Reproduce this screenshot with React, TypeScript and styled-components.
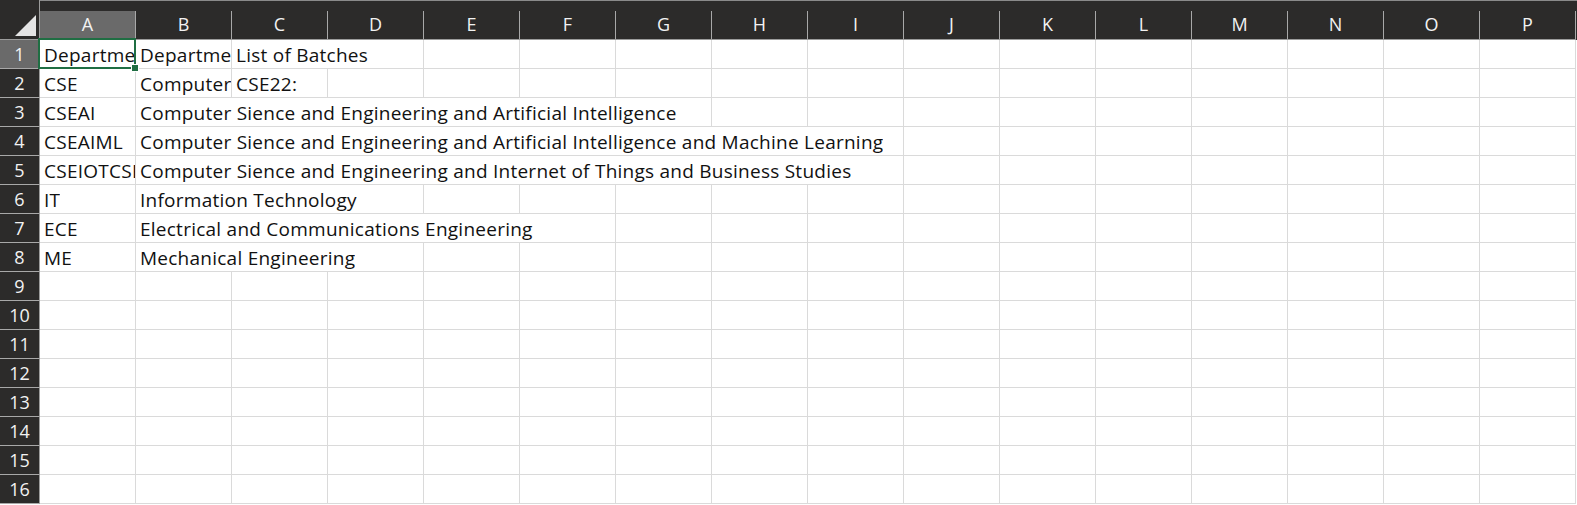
import React from 'react';
import styled, { createGlobalStyle } from 'styled-components';

const GlobalStyle = createGlobalStyle`
  html, body {
    margin: 0;
    padding: 0;
    background: #ffffff;
    overflow: hidden;
  }
`;

const COLUMNS = ['A', 'B', 'C', 'D', 'E', 'F', 'G', 'H', 'I', 'J', 'K', 'L', 'M', 'N', 'O', 'P'];
const ROW_COUNT = 16;

type CellData = { col: number; span: number; text: string };

// text spills over empty neighbours like in Excel, so a cell spans the columns its text covers
const DATA: Record<number, CellData[]> = {
  1: [
    { col: 0, span: 1, text: 'Department Code' },
    { col: 1, span: 1, text: 'Department Name' },
    { col: 2, span: 2, text: 'List of Batches' },
  ],
  2: [
    { col: 0, span: 1, text: 'CSE' },
    { col: 1, span: 1, text: 'Computer Sience and Engineering' },
    { col: 2, span: 1, text: 'CSE22:' },
  ],
  3: [
    { col: 0, span: 1, text: 'CSEAI' },
    { col: 1, span: 6, text: 'Computer Sience and Engineering and Artificial Intelligence' },
  ],
  4: [
    { col: 0, span: 1, text: 'CSEAIML' },
    { col: 1, span: 8, text: 'Computer Sience and Engineering and Artificial Intelligence and Machine Learning' },
  ],
  5: [
    { col: 0, span: 1, text: 'CSEIOTCSBS' },
    { col: 1, span: 8, text: 'Computer Sience and Engineering and Internet of Things and Business Studies' },
  ],
  6: [
    { col: 0, span: 1, text: 'IT' },
    { col: 1, span: 3, text: 'Information Technology' },
  ],
  7: [
    { col: 0, span: 1, text: 'ECE' },
    { col: 1, span: 5, text: 'Electrical and Communications Engineering' },
  ],
  8: [
    { col: 0, span: 1, text: 'ME' },
    { col: 1, span: 3, text: 'Mechanical Engineering' },
  ],
};

const Sheet = styled.div`
  display: grid;
  grid-template-columns: 40px repeat(16, 96px) 1fr;
  grid-template-rows: 40px repeat(${ROW_COUNT}, 29px);
  width: 100vw;
  height: 100vh;
  font-family: 'Open Sans', 'Noto Sans', sans-serif;
`;

const Corner = styled.div`
  background: #2c2b2a;
  border-right: 1px solid #9c9c9c;
  border-bottom: 1px solid #9c9c9c;
  box-sizing: border-box;
  display: flex;
  align-items: flex-end;
  justify-content: flex-end;
  padding: 0 3px 3px 0;
`;

const CornerTriangle = styled.div`
  width: 0;
  height: 0;
  border-left: 21px solid transparent;
  border-bottom: 21px solid #e4e4e4;
`;

const ColHeader = styled.div`
  background: #2c2b2a;
  box-shadow: inset 0 1px 0 #8a8a8a;
  border-bottom: 1px solid #9c9c9c;
  box-sizing: border-box;
  display: flex;
  align-items: flex-end;
`;

const ColLabel = styled.div<{ $selected?: boolean }>`
  flex: 1;
  height: 28px;
  box-sizing: border-box;
  border-right: 1px solid #a8a8a8;
  background: ${(p) => (p.$selected ? '#6a6a6a' : 'transparent')};
  color: #f2f2f2;
  font-size: 18px;
  line-height: 26px;
  text-align: center;
`;

const RowHeader = styled.div<{ $selected?: boolean }>`
  background: ${(p) => (p.$selected ? '#6a6a6a' : '#2c2b2a')};
  color: #f2f2f2;
  border-right: 1px solid #9c9c9c;
  border-bottom: 1px solid #a8a8a8;
  box-sizing: border-box;
  font-size: 18px;
  line-height: 28px;
  text-align: center;
`;

const Cell = styled.div<{ $span: number; $active?: boolean }>`
  grid-column: span ${(p) => p.$span};
  position: relative;
  box-sizing: border-box;
  border-right: 1px solid #dadada;
  border-bottom: 1px solid #dadada;
  padding: 0 0 1px 4px;
  display: flex;
  align-items: flex-end;
  white-space: nowrap;
  overflow: ${(p) => (p.$active ? 'visible' : 'hidden')};
  color: #111111;
  font-size: 19px;
  letter-spacing: 0.25px;
  line-height: 24px;

  ${(p) =>
    p.$active &&
    `
    &::after {
      content: '';
      position: absolute;
      left: -2px;
      top: -2px;
      right: -1px;
      bottom: -1px;
      border: 2px solid #1f6e43;
      pointer-events: none;
    }
    &::before {
      content: '';
      position: absolute;
      right: -4px;
      bottom: -4px;
      width: 6px;
      height: 6px;
      background: #1f6e43;
      border: 1px solid #ffffff;
      z-index: 2;
    }
  `}
`;

const CellText = styled.span`
  display: block;
  overflow: hidden;
  max-width: 100%;
`;

const Filler = styled.div<{ $header?: boolean }>`
  background: ${(p) => (p.$header ? '#2c2b2a' : '#ffffff')};
  box-shadow: ${(p) => (p.$header ? 'inset 0 1px 0 #8a8a8a' : 'none')};
`;

const renderRow = (row: number) => {
  const cells = DATA[row] || [];
  const out: React.ReactNode[] = [];
  let col = 0;
  while (col < COLUMNS.length) {
    const found = cells.find((c) => c.col === col);
    if (found) {
      out.push(
        <Cell key={`${row}-${col}`} $span={found.span} $active={row === 1 && col === 0}>
          <CellText>{found.text}</CellText>
        </Cell>
      );
      col += found.span;
    } else {
      out.push(<Cell key={`${row}-${col}`} $span={1} />);
      col += 1;
    }
  }
  return out;
};

const App: React.FC = () => {
  const rows = Array.from({ length: ROW_COUNT }, (_, i) => i + 1);

  return (
    <>
      <GlobalStyle />
      <Sheet>
        <Corner>
          <CornerTriangle />
        </Corner>
        {COLUMNS.map((c, i) => (
          <ColHeader key={c}>
            <ColLabel $selected={i === 0}>{c}</ColLabel>
          </ColHeader>
        ))}
        <Filler $header />

        {rows.map((r) => (
          <React.Fragment key={r}>
            <RowHeader $selected={r === 1}>{r}</RowHeader>
            {renderRow(r)}
            <Filler />
          </React.Fragment>
        ))}
      </Sheet>
    </>
  );
};

export default App;
